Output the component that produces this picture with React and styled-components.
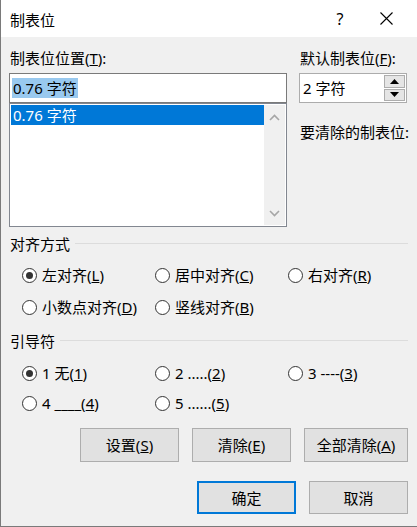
import React from "react";
import styled, { createGlobalStyle } from "styled-components";

const Global = createGlobalStyle`
  html, body { margin: 0; padding: 0; background: #f0f0f0; }
  body { font-family: "Noto Sans", "Noto Sans CJK SC", sans-serif; }
  * { box-sizing: border-box; }
`;

const Dialog = styled.div`
  width: 417px;
  height: 527px;
  background: #f0f0f0;
  border-left: 1px solid #7a7a7a;
  border-bottom: 1px solid #7a7a7a;
  display: flex;
  flex-direction: column;
  font-size: 15px;
  color: #000;
  overflow: hidden;
`;

const TitleBar = styled.div`
  height: 37px;
  background: #fff;
  display: flex;
  align-items: center;
  padding-left: 9px;
  flex-shrink: 0;
`;

const Title = styled.div`
  flex: 1;
  font-size: 15px;
  line-height: 20px;
  margin-top: 3px;
`;

const TitleButton = styled.div`
  width: ${(p) => p.w}px;
  height: 37px;
  display: flex;
  align-items: center;
  justify-content: center;
  font-size: 16px;
`;

const Body = styled.div`
  padding: 0 9px 0 8px;
  display: flex;
  flex-direction: column;
`;

const TopGrid = styled.div`
  display: grid;
  grid-template-columns: 278px 108px;
  column-gap: 12px;
  margin-top: 11px;
`;

const Col = styled.div`
  display: flex;
  flex-direction: column;
`;

const Label = styled.div`
  line-height: 20px;
  height: 20px;
  padding-left: 1px;
  white-space: nowrap;
  margin-top: ${(p) => p.mt || 0}px;
  margin-bottom: ${(p) => p.mb || 0}px;
`;

const TextInput = styled.div`
  height: 30px;
  background: #fff;
  border: 1px solid #7a7a7a;
  display: flex;
  align-items: center;
  padding-left: 2px;
`;

const Sel = styled.span`
  background: #99c9ef;
  line-height: 20px;
  padding: 0 1px;
`;

const ListBox = styled.div`
  height: 124px;
  background: #fff;
  border: 1px solid #828790;
  display: flex;
  padding: 1px;
`;

const ListItems = styled.div`
  flex: 1;
`;

const ListItem = styled.div`
  height: 20px;
  line-height: 20px;
  background: #0078d7;
  color: #fff;
  padding-left: 2px;
`;

const ScrollBar = styled.div`
  width: 21px;
  background: #f0f0f0;
  display: flex;
  flex-direction: column;
  justify-content: space-between;
  align-items: center;
  padding: 9px 0 8px;
`;

const SpinBox = styled.div`
  height: 30px;
  background: #fff;
  border: 1px solid #acacac;
  display: flex;
  align-items: center;
  padding: 1px;
`;

const SpinText = styled.div`
  flex: 1;
  padding-left: 2px;
  line-height: 20px;
`;

const SpinButtons = styled.div`
  width: 21px;
  height: 100%;
  display: flex;
  flex-direction: column;
  gap: 1px;
`;

const SpinButton = styled.div`
  flex: 1;
  background: #e5e5e5;
  border: 1px solid #adadad;
  display: flex;
  align-items: center;
  justify-content: center;
`;

const GroupHeader = styled.div`
  display: flex;
  align-items: center;
  height: 20px;
  margin-top: ${(p) => p.mt}px;
  padding-left: 1px;
  &::after {
    content: "";
    flex: 1;
    height: 1px;
    background: #dcdcdc;
    margin-left: 5px;
    margin-top: 1px;
  }
`;

const RadioGrid = styled.div`
  display: grid;
  grid-template-columns: 133px 133px 120px;
  grid-auto-rows: ${(p) => p.rh}px;
  padding-left: 13px;
  margin-top: ${(p) => p.mt}px;
`;

const RadioItem = styled.div`
  display: flex;
  align-items: center;
  white-space: nowrap;
`;

const Circle = styled.span`
  width: 15px;
  height: 15px;
  border-radius: 50%;
  border: 1px solid #333;
  background: #fff;
  display: flex;
  align-items: center;
  justify-content: center;
  margin-right: 5px;
  flex-shrink: 0;
  &::after {
    content: "";
    display: ${(p) => (p.checked ? "block" : "none")};
    width: 7px;
    height: 7px;
    border-radius: 50%;
    background: #333;
  }
`;

const RadioText = styled.span`
  line-height: 20px;
`;

const ButtonRow = styled.div`
  display: flex;
  justify-content: flex-end;
  gap: 13px;
  margin-top: ${(p) => p.mt}px;
`;

const Button = styled.div`
  width: ${(p) => p.w || 99}px;
  height: ${(p) => p.h || 34}px;
  background: #e1e1e1;
  border: ${(p) => (p.primary ? "2px solid #0078d7" : "1px solid #adadad")};
  display: flex;
  align-items: center;
  justify-content: center;
  line-height: 20px;
  white-space: nowrap;
`;

const Chevron = ({ up }) => (
  <svg width="11" height="7" viewBox="0 0 11 7">
    <polyline
      points={up ? "1,6 5.5,1.5 10,6" : "1,1 5.5,5.5 10,1"}
      fill="none"
      stroke="#a6a6a6"
      strokeWidth="1.6"
    />
  </svg>
);

const Tri = ({ up }) => (
  <svg width="9" height="5" viewBox="0 0 9 5">
    <polygon points={up ? "0,5 4.5,0 9,5" : "0,0 9,0 4.5,5"} fill="#000" />
  </svg>
);

const Radio = ({ checked, children }) => (
  <RadioItem>
    <Circle checked={checked} />
    <RadioText>{children}</RadioText>
  </RadioItem>
);

export default function App() {
  return (
    <>
      <Global />
      <Dialog>
        <TitleBar>
          <Title>制表位</Title>
          <TitleButton w={46}>?</TitleButton>
          <TitleButton w={46}>
            <svg width="13" height="13" viewBox="0 0 13 13">
              <path d="M0.5 0.5 L12.5 12.5 M12.5 0.5 L0.5 12.5" stroke="#000" strokeWidth="1.1" />
            </svg>
          </TitleButton>
          <span style={{ width: 8 }} />
        </TitleBar>
        <Body>
          <TopGrid>
            <Col>
              <Label mb={5}>
                制表位位置(<u>T</u>):
              </Label>
              <TextInput>
                <Sel>0.76 字符</Sel>
              </TextInput>
              <ListBox>
                <ListItems>
                  <ListItem>0.76 字符</ListItem>
                </ListItems>
                <ScrollBar>
                  <Chevron up />
                  <Chevron />
                </ScrollBar>
              </ListBox>
            </Col>
            <Col>
              <Label mb={5}>
                默认制表位(<u>F</u>):
              </Label>
              <SpinBox>
                <SpinText>2 字符</SpinText>
                <SpinButtons>
                  <SpinButton>
                    <Tri up />
                  </SpinButton>
                  <SpinButton>
                    <Tri />
                  </SpinButton>
                </SpinButtons>
              </SpinBox>
              <Label mt={19}>要清除的制表位:</Label>
            </Col>
          </TopGrid>

          <GroupHeader mt={6}>对齐方式</GroupHeader>
          <RadioGrid rh={32} mt={6}>
            <Radio checked>
              左对齐(<u>L</u>)
            </Radio>
            <Radio>
              居中对齐(<u>C</u>)
            </Radio>
            <Radio>
              右对齐(<u>R</u>)
            </Radio>
            <Radio>
              小数点对齐(<u>D</u>)
            </Radio>
            <Radio>
              竖线对齐(<u>B</u>)
            </Radio>
          </RadioGrid>

          <GroupHeader mt={7}>引导符</GroupHeader>
          <RadioGrid rh={30} mt={8}>
            <Radio checked>
              1 无(<u>1</u>)
            </Radio>
            <Radio>
              2 .....(<u>2</u>)
            </Radio>
            <Radio>
              3 ----(<u>3</u>)
            </Radio>
            <Radio>
              4 ____(<u>4</u>)
            </Radio>
            <Radio>
              5 ......(<u>5</u>)
            </Radio>
          </RadioGrid>

          <ButtonRow mt={10}>
            <Button>
              设置(<u>S</u>)
            </Button>
            <Button>
              清除(<u>E</u>)
            </Button>
            <Button w={104}>
              全部清除(<u>A</u>)
            </Button>
          </ButtonRow>
          <ButtonRow mt={19}>
            <Button primary h={33}>
              确定
            </Button>
            <Button h={33}>取消</Button>
          </ButtonRow>
        </Body>
      </Dialog>
    </>
  );
}
